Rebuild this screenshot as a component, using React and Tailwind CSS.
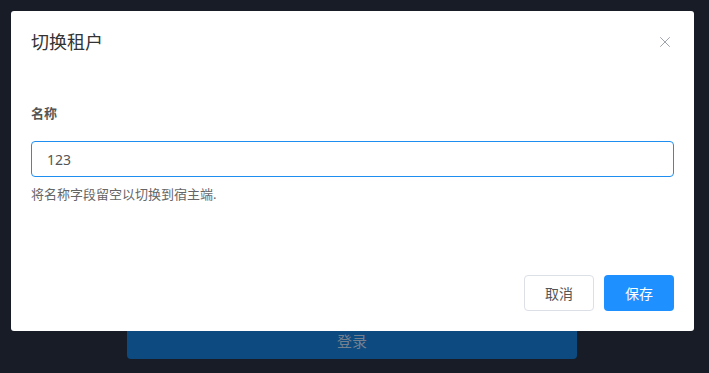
import { X } from 'lucide-react';

export default function App() {
  return (
    <div
      className="relative h-[373px] w-full overflow-hidden bg-[#171c26]"
      style={{ fontFamily: '"Noto Sans", "Noto Sans CJK SC", sans-serif' }}
    >
      <div className="flex h-full flex-col items-center justify-end pb-[14px] pr-[5px]">
        <button className="flex h-[46px] w-[450px] items-center justify-center rounded-[4px] bg-[#0c4a80] pt-[10px] text-[15px] text-[#75808f]">
          登录
        </button>
      </div>

      <div className="absolute inset-0">
        <div className="absolute left-[11px] top-[11px] flex h-[320px] w-[683px] flex-col rounded-[3px] bg-white">
          <div className="flex items-center justify-between pl-[20px] pr-[20px] pt-[18px]">
            <h2 className="text-[18px] leading-[26px] text-[#333]">切换租户</h2>
            <X size={18} strokeWidth={1.1} className="text-[#8a8f99]" />
          </div>

          <div className="px-[20px] pt-[48px]">
            <label className="block text-[13px] font-bold leading-[20px] text-[#555]">名称</label>
            <div className="mt-[18px] flex h-[36px] items-center rounded-[4px] border border-[#1e8ff0] px-[15px] text-[14px] text-[#555]">
              123
            </div>
            <p className="mt-[7px] text-[13px] leading-[20px] text-[#666]">将名称字段留空以切换到宿主端.</p>
          </div>

          <div className="mt-auto flex justify-end gap-[10px] px-[20px] pb-[20px]">
            <button className="h-[36px] w-[70px] rounded-[4px] border border-[#dcdfe6] bg-white text-[14px] text-[#555]">
              取消
            </button>
            <button className="h-[36px] w-[70px] rounded-[4px] bg-[#1e90ff] text-[14px] text-white">
              保存
            </button>
          </div>
        </div>
      </div>
    </div>
  );
}
